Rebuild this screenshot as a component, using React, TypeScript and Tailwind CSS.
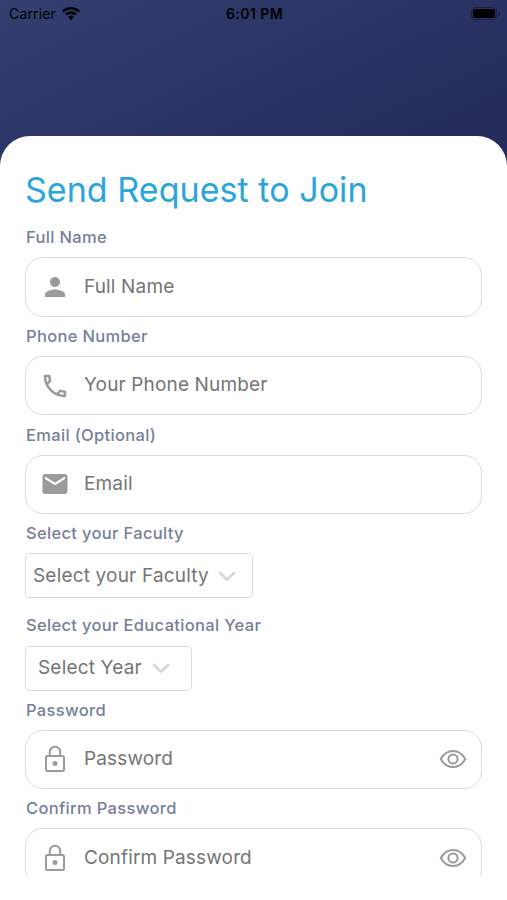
import React from "react";
import { MdPerson, MdEmail, MdOutlinePhone } from "react-icons/md";

interface FieldProps {
  label: string;
  placeholder: string;
  icon: React.ReactNode;
  type?: string;
}

interface PickerProps {
  label: string;
  value: string;
  className: string;
}

function StatusBar() {
  return (
    <div className="flex h-[27px] items-center justify-between pl-[9px] pr-[7px] text-black">
      <div className="flex flex-1 items-center gap-[6px]">
        <span className="text-[14px] tracking-[0.15px]">Carrier</span>
        <svg width="18" height="14" viewBox="0 0 18 14" fill="currentColor">
          <path d="M9 0C5.600 0 2.400 1.300 0 3.600l1.700 1.800C3.700 3.500 6.200 2.500 9 2.500s5.300 1 7.300 2.900L18 3.600C15.600 1.300 12.400 0 9 0Z" />
          <path d="M9 4.200c-2.200 0-4.200.8-5.800 2.300l1.900 2C6.100 7.500 7.500 6.900 9 6.900s2.900.6 3.900 1.600l1.900-2C13.200 5 11.200 4.200 9 4.200Z" />
          <path d="M9 8.600c-1.100 0-2.100.4-2.800 1.100L9 13.500l2.800-3.800C11.100 9 10.100 8.600 9 8.600Z" />
        </svg>
      </div>
      <span className="text-[14px] font-semibold tracking-[0.45px]">6:01 PM</span>
      <div className="flex flex-1 items-center justify-end gap-px">
        <div className="h-[13px] w-[26px] rounded-[4px] border border-black/35 p-px">
          <div className="h-full w-full rounded-[2px] bg-black" />
        </div>
        <div className="h-1 w-[2px] rounded-r-full bg-black/35" />
      </div>
    </div>
  );
}

function EyeIcon() {
  return (
    <svg width="28" height="20" viewBox="0 0 28 20" fill="none" stroke="#9b9b9b" strokeWidth="2">
      <path d="M1.800 10C4.500 5 8.800 2 14 2S23.500 5 26.200 10C23.500 15 19.200 18 14 18S4.500 15 1.800 10Z" />
      <circle cx="14" cy="10" r="4.600" />
    </svg>
  );
}

function LockIcon() {
  return (
    <svg width="30" height="30" viewBox="0 0 30 30" fill="none" stroke="#9b9b9b" strokeWidth="2">
      <rect x="6" y="12" width="18" height="15" rx="1.500" />
      <path d="M9.800 12V8a5.200 5.200 0 0 1 10.400 0v4" />
      <circle cx="15" cy="19.500" r="2.500" fill="#9b9b9b" stroke="none" />
    </svg>
  );
}

function Chevron() {
  return (
    <svg width="18" height="11" viewBox="0 0 18 11" fill="none" stroke="#cfd6df" strokeWidth="2.600">
      <path d="M1.200 1.200 9 8.800l7.800-7.600" />
    </svg>
  );
}

function Label({ children }: { children: React.ReactNode }) {
  return (
    <span className="flex h-[39.300px] items-center pl-px text-[16.500px] font-medium tracking-[0.330px] text-[#75809b]">
      {children}
    </span>
  );
}

function Field({ label, placeholder, icon, type = "text" }: FieldProps) {
  return (
    <label className="block">
      <Label>{label}</Label>
      <div className="flex h-[59.300px] items-center rounded-[18px] border border-[#d6dae2] pl-[14px] pr-[14px]">
        <span className="text-[30px] text-[#9b9b9b]">{icon}</span>
        <input
          type={type}
          placeholder={placeholder}
          className="ml-[14px] min-w-0 flex-1 text-[19px] tracking-[0.150px] outline-none placeholder:text-[#757575]"
        />
        {type === "password" && <EyeIcon />}
      </div>
    </label>
  );
}

function Picker({ label, value, className }: PickerProps) {
  return (
    <div>
      <Label>{label}</Label>
      <button
        className={`flex h-[45px] items-center rounded-[5px] border border-[#d6dae2] text-[19px] tracking-[0.180px] text-[#757575] ${className}`}
      >
        {value}
        <Chevron />
      </button>
    </div>
  );
}

export default function App() {
  return (
    <div className="flex h-[900px] w-full flex-col bg-[linear-gradient(155deg,#34406f_0px,#2b3566_150px,#252c5b_330px)] font-['Inter',sans-serif]">
      <StatusBar />

      <div className="mt-[109px] flex min-h-0 flex-1 flex-col rounded-t-[30px] bg-white pb-[24px]">
        {/* Scrollable form */}
        <div className="min-h-0 flex-1 overflow-hidden px-[25px]">
          <h1 className="mt-[32px] mb-[6.130px] h-[44px] text-[34px] leading-[44px] tracking-[0.050px] text-[#29a5dc]">
            Send Request to Join
          </h1>

          <Field label="Full Name" placeholder="Full Name" icon={<MdPerson />} />
          <Field label="Phone Number" placeholder="Your Phone Number" icon={<MdOutlinePhone />} />
          <Field label="Email (Optional)" placeholder="Email" icon={<MdEmail />} />

          <Picker label="Select your Faculty" value="Select your Faculty" className="w-[228px] gap-[9px] pl-[7px] pt-px" />
          <div className="h-[8px]" />
          <Picker label="Select your Educational Year" value="Select Year" className="w-[167px] gap-[10px] pl-[12px] pt-px" />

          <Field label="Password" placeholder="Password" icon={<LockIcon />} type="password" />
          <Field label="Confirm Password" placeholder="Confirm Password" icon={<LockIcon />} type="password" />
        </div>
      </div>
    </div>
  );
}
